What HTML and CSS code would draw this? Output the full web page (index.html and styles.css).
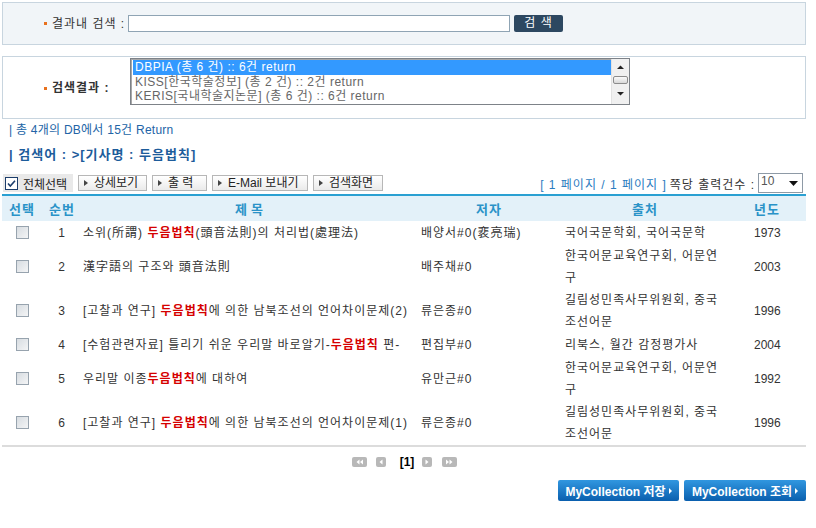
FILE: index.html
```html
<!DOCTYPE html>
<html lang="ko">
<head>
    <meta charset="UTF-8">
    <title>검색결과</title>
    <link rel="stylesheet" href="styles.css">
</head>
<body>
<div class="page">
    <div class="box search-box">
        <span class="label label-search"><i class="dot"></i>결과내 검색 :</span>
        <span class="text-input"></span>
        <span class="btn-dark">검 색</span>
    </div>

    <div class="box result-box">
        <span class="label label-result"><i class="dot"></i>검색결과 :</span>
        <div class="listbox">
            <div class="options">
                <div class="opt selected">DBPIA (총 6 건) :: 6건 return</div>
                <div class="opt">KISS[한국학술정보] (총 2 건) :: 2건 return</div>
                <div class="opt">KERIS[국내학술지논문] (총 6 건) :: 6건 return</div>
            </div>
            <div class="scrollbar">
                <svg class="sb-arrow" width="15" height="13" viewBox="0 0 15 13"><path d="M4 8 L7.5 4.5 L11 8Z" fill="#222"/></svg>
                <span class="sb-thumb"></span>
                <svg class="sb-arrow" width="15" height="13" viewBox="0 0 15 13"><path d="M4 5 L7.5 8.5 L11 5Z" fill="#222"/></svg>
            </div>
        </div>
    </div>

    <p class="info">| 총 4개의 DB에서 15건 Return</p>
    <p class="query">| 검색어 : &gt;[기사명 : 두음법칙]</p>

    <div class="toolbar">
        <div class="tools">
            <span class="check-all">
                <svg width="13" height="13" viewBox="0 0 13 13"><rect x="0.5" y="0.5" width="12" height="12" fill="#fff" stroke="#1c3d6b"/><path d="M3 6.5 L5.3 9 L10 3.8" fill="none" stroke="#1c3d6b" stroke-width="1.6"/></svg>
                전체선택
            </span>
            <span class="tbtn w-detail">상세보기</span>
            <span class="tbtn w-print">출 력</span>
            <span class="tbtn w-mail">E-Mail 보내기</span>
            <span class="tbtn w-back">검색화면</span>
        </div>
        <div class="paging-info">
            <span class="pages">[ 1 페이지 / 1 페이지 ]</span>
            <span class="per">쪽당 출력건수 :</span>
            <span class="combo">10<svg width="9" height="5" viewBox="0 0 9 5"><path d="M0 0 H9 L4.5 5Z" fill="#111"/></svg></span>
        </div>
    </div>

    <table class="list">
        <colgroup>
            <col class="c-sel"><col class="c-no"><col class="c-title"><col class="c-author"><col class="c-src"><col class="c-year">
        </colgroup>
        <thead>
            <tr>
                <th>선택</th>
                <th>순번</th>
                <th class="th-title">제목</th>
                <th>저자</th>
                <th class="th-src">출처</th>
                <th class="th-year">년도</th>
            </tr>
        </thead>
        <tbody>
            <tr>
                <td class="sel"><span class="cb"></span></td>
                <td class="no">1</td>
                <td class="title">소위(所謂) <b class="hl">두음법칙</b>(頭音法則)의 처리법(處理法)</td>
                <td class="author">배양서#0(裵亮瑞)</td>
                <td class="src">국어국문학회, 국어국문학</td>
                <td class="year">1973</td>
            </tr>
            <tr>
                <td class="sel"><span class="cb"></span></td>
                <td class="no">2</td>
                <td class="title">漢字語의 구조와 頭音法則</td>
                <td class="author">배주채#0</td>
                <td class="src">한국어문교육연구회, 어문연구</td>
                <td class="year">2003</td>
            </tr>
            <tr>
                <td class="sel"><span class="cb"></span></td>
                <td class="no">3</td>
                <td class="title">[고찰과 연구] <b class="hl">두음법칙</b>에 의한 남북조선의 언어차이문제(2)</td>
                <td class="author">류은종#0</td>
                <td class="src">길림성민족사무위원회, 중국 조선어문</td>
                <td class="year">1996</td>
            </tr>
            <tr>
                <td class="sel"><span class="cb"></span></td>
                <td class="no">4</td>
                <td class="title">[수험관련자료] 틀리기 쉬운 우리말 바로알기-<b class="hl">두음법칙</b> 편-</td>
                <td class="author">편집부#0</td>
                <td class="src">리북스, 월간 감정평가사</td>
                <td class="year">2004</td>
            </tr>
            <tr>
                <td class="sel"><span class="cb"></span></td>
                <td class="no">5</td>
                <td class="title">우리말 이종<b class="hl">두음법칙</b>에 대하여</td>
                <td class="author">유만근#0</td>
                <td class="src">한국어문교육연구회, 어문연구</td>
                <td class="year">1992</td>
            </tr>
            <tr>
                <td class="sel"><span class="cb"></span></td>
                <td class="no">6</td>
                <td class="title">[고찰과 연구] <b class="hl">두음법칙</b>에 의한 남북조선의 언어차이문제(1)</td>
                <td class="author">류은종#0</td>
                <td class="src">길림성민족사무위원회, 중국 조선어문</td>
                <td class="year">1996</td>
            </tr>
        </tbody>
    </table>

    <div class="pager">
        <svg class="pg" width="15" height="10" viewBox="0 0 15 10"><rect width="15" height="10" rx="2" fill="#b8b8b8"/><path d="M7.5 2.5 L4.5 5 L7.5 7.5Z M11 2.5 L8 5 L11 7.5Z" fill="#fff"/></svg>
        <svg class="pg pg-prev" width="10" height="10" viewBox="0 0 10 10"><rect width="10" height="10" rx="2" fill="#b8b8b8"/><path d="M6.5 2.5 L3.5 5 L6.5 7.5Z" fill="#fff"/></svg>
        <b class="cur">[1]</b>
        <svg class="pg pg-next" width="10" height="10" viewBox="0 0 10 10"><rect width="10" height="10" rx="2" fill="#b8b8b8"/><path d="M3.5 2.5 L6.5 5 L3.5 7.5Z" fill="#fff"/></svg>
        <svg class="pg pg-last" width="15" height="10" viewBox="0 0 15 10"><rect width="15" height="10" rx="2" fill="#b8b8b8"/><path d="M4 2.5 L7 5 L4 7.5Z M7.5 2.5 L10.5 5 L7.5 7.5Z" fill="#fff"/></svg>
    </div>

    <div class="collection">
        <span class="btn-blue w-save">MyCollection 저장<i class="arr"></i></span>
        <span class="btn-blue w-view">MyCollection 조회<i class="arr"></i></span>
    </div>
</div>
</body>
</html>
```

FILE: styles.css
```css
body {
    margin: 2px;
    background: #fff;
    color: #333;
    font-family: "Liberation Sans", "Noto Sans CJK KR", sans-serif;
    font-size: 12px;
    letter-spacing: 1px;
}
.page {
    width: 804px;
}
p {
    margin: 0;
}

/* search boxes */
.box {
    display: flex;
    border: 1px solid #c8d5df;
}
.search-box {
    height: 41px;
    align-items: center;
    padding-left: 41px;
    background: #f1f5f8;
}
.label {
    display: flex;
    align-items: center;
    line-height: 16px;
    color: #333;
}
.dot {
    width: 3px;
    height: 3px;
    margin-right: 5px;
    background: #e8711e;
}
.label-search {
    width: 84px;
}
.text-input {
    width: 380px;
    height: 15px;
    border: 1px solid #8fa4b4;
    background: #fff;
}
.btn-dark {
    width: 49px;
    height: 17px;
    margin-left: 4px;
    border-radius: 2px;
    background: #2d4861;
    color: #fff;
    line-height: 17px;
    text-align: center;
}
.result-box {
    height: 61px;
    margin-top: 11px;
    padding-left: 41px;
    align-items: flex-start;
}
.label-result {
    width: 86px;
    margin-top: 23px;
    font-weight: bold;
}

/* fake listbox */
.listbox {
    display: flex;
    width: 498px;
    height: 45px;
    margin-top: 1px;
    border: 1px solid #7d8288;
    box-shadow: inset 1px 1px 0 #a8a8a8;
    background: #fff;
}
.options {
    flex: 1;
    padding: 1px 0 0 2px;
}
.opt {
    height: 14px;
    padding-left: 2px;
    line-height: 14px;
    color: #666;
    letter-spacing: 0.5px;
    white-space: nowrap;
}
.opt.selected {
    height: 15px;
    background: #3399ff;
    color: #fff;
}
.scrollbar {
    display: flex;
    flex-direction: column;
    align-items: center;
    width: 17px;
    background: #f0f0f0;
    border-left: 1px solid #e2e2e2;
}
.sb-arrow {
    margin-top: 2px;
}
.sb-thumb {
    width: 13px;
    height: 6px;
    margin: 2px 0 1px;
    border: 1px solid #8c8c8c;
    border-radius: 2px;
    background: linear-gradient(#fafafa, #d8d8d8);
}

/* summary lines */
.info {
    margin-top: 3px;
    padding-left: 7px;
    line-height: 16px;
    letter-spacing: 0.25px;
    color: #2264a6;
}
.query {
    margin-top: 7px;
    padding-left: 7px;
    line-height: 20px;
    font-weight: bold;
    font-size: 13px;
    color: #1d5c9b;
}

/* toolbar */
.toolbar {
    display: flex;
    justify-content: space-between;
    align-items: center;
    height: 22px;
    padding-top: 7px;
}
.tools {
    display: flex;
    align-items: center;
    gap: 5px;
    padding-left: 1px;
    letter-spacing: 0;
}
.check-all {
    display: flex;
    align-items: center;
    gap: 5px;
    width: 68px;
    height: 18px;
    padding-left: 2px;
    background: #e9e9e9;
    color: #222;
}
.tbtn {
    position: relative;
    height: 16px;
    padding-left: 15px;
    border: 1px solid #b7b7b7;
    background: linear-gradient(#fff, #eaeaea);
    line-height: 15px;
    color: #222;
    box-sizing: border-box;
}
.tbtn::before {
    content: "";
    position: absolute;
    left: 5px;
    top: 4px;
    border-left: 4px solid #444;
    border-top: 3px solid transparent;
    border-bottom: 3px solid transparent;
}
.w-detail { width: 69px; }
.w-print { width: 55px; }
.w-mail { width: 96px; }
.w-back { width: 70px; }
.paging-info {
    display: flex;
    align-items: center;
    gap: 3px;
    padding-right: 3px;
}
.pages {
    color: #2b7cc0;
}
.per {
    color: #333;
}
.combo {
    display: flex;
    justify-content: space-between;
    align-items: flex-start;
    width: 37px;
    height: 18px;
    padding: 0 4px 0 2px;
    border: 1px solid #8e9aa6;
    line-height: 14px;
    letter-spacing: 0;
    color: #555;
}
.combo svg {
    margin-top: 7px;
}

/* results table */
.list {
    width: 804px;
    border-collapse: collapse;
    table-layout: fixed;
    border-top: 2px solid #2aa0d2;
    border-bottom: 2px solid #dcdcdc;
}
.c-sel { width: 40px; }
.c-no { width: 40px; }
.c-title { width: 334px; }
.c-author { width: 146px; }
.c-src { width: 182px; }
.c-year { width: 62px; }
.list th {
    height: 25px;
    padding: 0;
    background: #e3f1f9;
    color: #2a93c8;
    font-size: 13px;
    font-weight: bold;
    text-align: center;
}
.list th.th-title {
    letter-spacing: 4px;
    padding-left: 4px;
}
.list th.th-src {
    padding-right: 16px;
}
.list th.th-year {
    padding-right: 16px;
}
.list td {
    height: 24px;
    padding: 0;
    line-height: 22px;
    color: #333;
    vertical-align: middle;
}
.list td.sel {
    text-align: center;
}
.list td.no {
    text-align: center;
}
.list td.title {
    padding-left: 1px;
    white-space: nowrap;
}
.list td.author {
    padding-left: 5px;
}
.list td.src {
    padding: 0 20px 0 3px;
}
.list td.year {
    padding-left: 10px;
    letter-spacing: 0;
}
.cb {
    display: inline-block;
    width: 11px;
    height: 11px;
    margin-top: 4px;
    border: 1px solid #97a3ae;
    background: linear-gradient(135deg, #d7dce1, #f4f5f6);
    vertical-align: top;
}
.hl {
    color: #d50000;
}

/* pager */
.pager {
    display: flex;
    justify-content: center;
    align-items: center;
    height: 12px;
    margin-top: 9px;
    padding-left: 1px;
    letter-spacing: 0;
}
.pg-prev {
    margin-left: 9px;
}
.cur {
    margin: 0 8px 0 14px;
    color: #000;
    font-size: 12px;
}
.pg-last {
    margin-left: 10px;
}

/* bottom buttons */
.collection {
    display: flex;
    justify-content: flex-end;
    gap: 5px;
    margin-top: 12px;
    letter-spacing: 0;
}
.btn-blue {
    display: flex;
    align-items: center;
    justify-content: center;
    height: 21px;
    border-radius: 2px;
    background: linear-gradient(#3197e0, #0a5fae);
    color: #fff;
    font-weight: bold;
    font-size: 12px;
}
.w-save { width: 121px; }
.w-view { width: 122px; }
.arr {
    margin-left: 3px;
    border-left: 3px solid #fff;
    border-top: 3px solid transparent;
    border-bottom: 3px solid transparent;
}
```
